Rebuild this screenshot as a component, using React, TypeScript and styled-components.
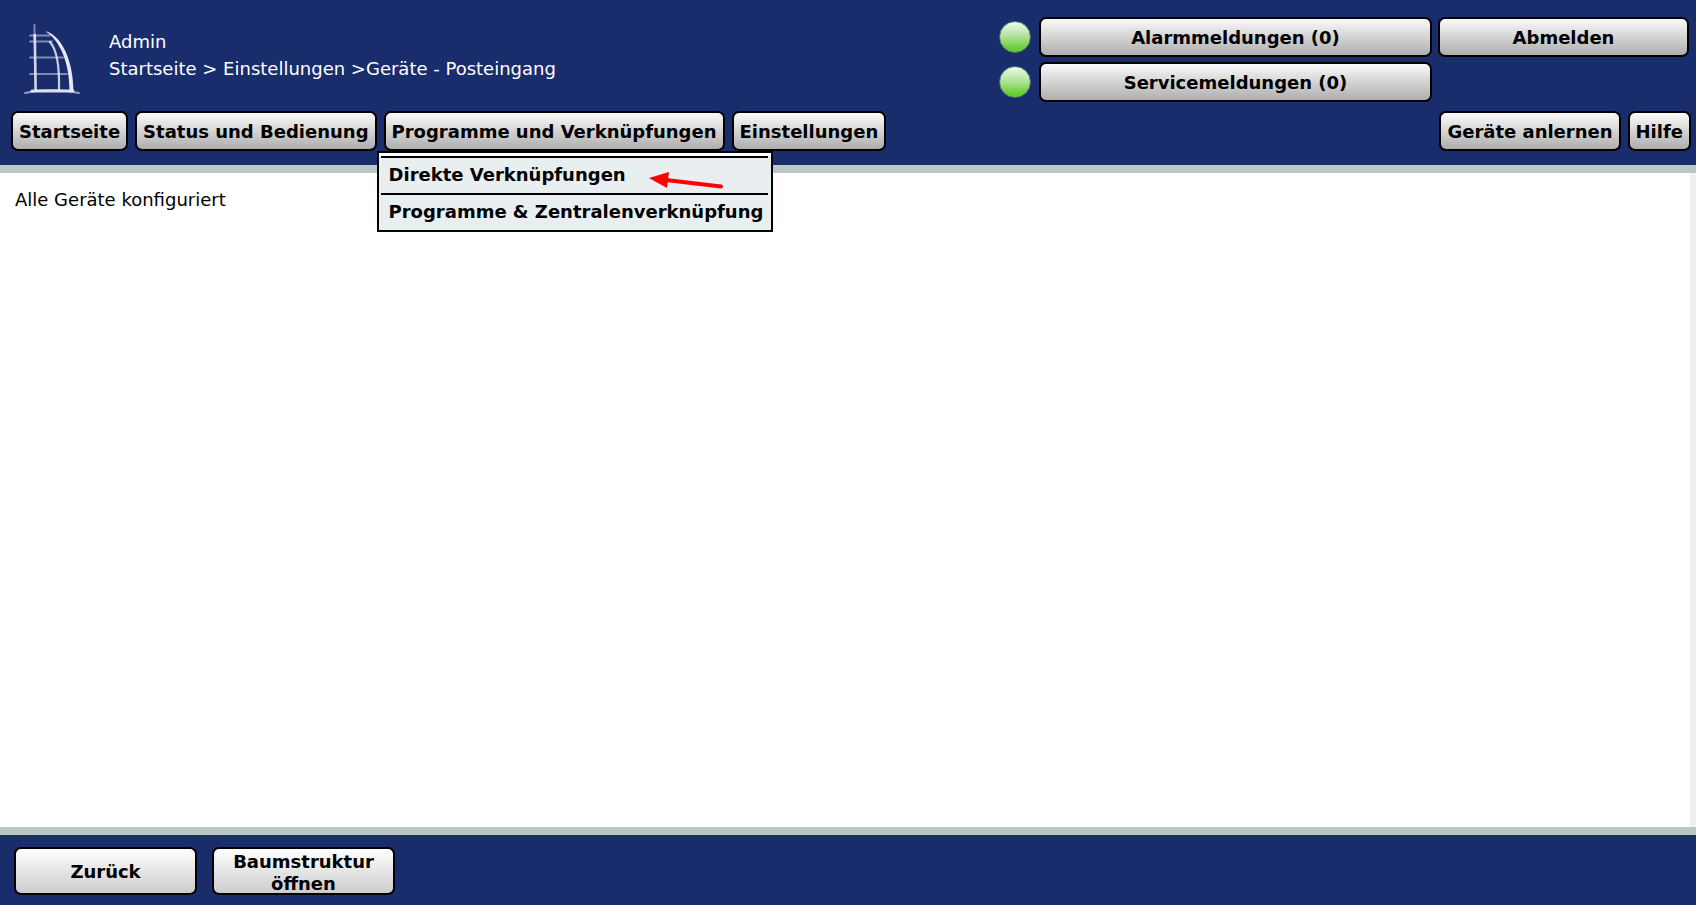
import React from "react";
import styled, { createGlobalStyle } from "styled-components";

const GlobalStyle = createGlobalStyle`
  *, *::before, *::after { box-sizing: border-box; }
  body {
    margin: 0;
    font-family: Verdana, "DejaVu Sans", sans-serif;
    font-size: 18px;
    line-height: 22px;
    color: #000;
    background: #fff;
  }
`;

const Page = styled.div`
  display: flex;
  flex-direction: column;
  min-height: 100vh;
`;

const Header = styled.header`
  background: #192c6c;
  border-bottom: 8px solid #bac6ca;
  padding: 17px 5px 14px 11px;
`;

const HeaderTop = styled.div`
  display: flex;
  align-items: flex-start;
  padding-right: 2px;
  margin-bottom: 9px;
`;

const Logo = styled.svg`
  display: block;
  flex: none;
  width: 60px;
  height: 76px;
  margin: 3px 26px 0 12px;
`;

const UserInfo = styled.div`
  flex: 1;
  padding-top: 11px;
  color: #fff;
  line-height: 27px;
`;

const Crumbs = styled.nav`
  white-space: pre;
`;

const CrumbLink = styled.a`
  color: inherit;
  text-decoration: none;
`;

const StatusGrid = styled.div`
  display: grid;
  grid-template-columns: 34px 393px 251px;
  column-gap: 6px;
  row-gap: 5px;
  align-items: center;
`;

const Lamp = styled.span`
  display: block;
  grid-column: 1;
  width: 32px;
  height: 32px;
  border-radius: 50%;
  border: 1px solid #4b7470;
  background: linear-gradient(#e9f7e3 5%, #a5df8b 55%, #68cd31 88%);
`;

const Button = styled.button<{ $footer?: boolean }>`
  height: ${(p) => (p.$footer ? 48 : 40)}px;
  width: ${(p) => (p.$footer ? "183px" : "auto")};
  padding: 2px 6px 0;
  border: 2px solid #000;
  border-radius: 7px;
  background: linear-gradient(${(p) => (p.$footer ? "#ffffff, #cccccc" : "#fafafa, #aeaeae")});
  color: #000;
  font: inherit;
  font-weight: bold;
  cursor: pointer;
`;

const MenuBar = styled.nav`
  display: flex;
  gap: 7px;
`;

const MenuGroup = styled.div<{ $end?: boolean }>`
  position: relative;
  margin-left: ${(p) => (p.$end ? "auto" : "0")};
`;

const Dropdown = styled.ul`
  position: absolute;
  top: 40px;
  left: -7px;
  z-index: 1;
  margin: 0;
  padding: 3px 3px 0 2px;
  border: 2px solid #000;
  background: linear-gradient(#fff 3px, #e9eff1 3px);
  list-style: none;
  white-space: nowrap;
`;

const MenuItem = styled.li`
  border-top: 2px solid #000;
`;

const MenuLink = styled.a`
  display: block;
  padding: 6px 5px 7px 8px;
  color: #000;
  font-weight: bold;
  text-decoration: none;
`;

const Pointer = styled.svg`
  position: absolute;
  top: 18px;
  left: 269px;
  width: 76px;
  height: 20px;
  pointer-events: none;
`;

const Content = styled.main`
  flex: 1;
  padding: 16px 15px;
  border-right: 6px solid #f0f0f0;
`;

const Footer = styled.footer`
  display: flex;
  gap: 15px;
  padding: 12px 14px 10px;
  background: #192c6c;
  border-top: 8px solid #bac6c6;
`;

function TowerLogo() {
  return (
    <Logo viewBox="0 0 60 76" fill="none" stroke="#e6eaf8" strokeLinecap="round" aria-label="Logo" role="img">
      <path d="M11.500 5V20" strokeWidth="2" opacity="0.5" />
      <path d="M11.800 15L12.600 70" strokeWidth="2.600" opacity="0.9" />
      <path d="M7 15.500H27M7 21.500H29M7 37.500H40M7 54H44" strokeWidth="1.800" opacity="0.5" />
      <path d="M24 12C38 17 50 38 50.500 71H46.500C46.500 42 37 22 24 12Z" fill="#e6eaf8" stroke="none" />
      <path d="M24 12C38 18 48 38 48.500 70" strokeWidth="1.500" opacity="0.6" />
      <path d="M27 22C34 30 36.500 50 36 70" strokeWidth="2.200" opacity="0.85" />
      <path d="M2 73Q27 67 56 73" strokeWidth="2" opacity="0.6" />
      <path d="M9 71H50" strokeWidth="3" opacity="0.9" />
    </Logo>
  );
}

export default function App() {
  return (
    <Page>
      <GlobalStyle />
      <Header>
        <HeaderTop>
          <TowerLogo />
          <UserInfo>
            <div>Admin</div>
            <Crumbs aria-label="Pfad">
              <CrumbLink href="#start">Startseite</CrumbLink>
              {" > "}
              <CrumbLink href="#einstellungen">Einstellungen</CrumbLink>
              {" >"}
              Geräte - Posteingang
            </Crumbs>
          </UserInfo>
          <StatusGrid>
            <Lamp />
            <Button type="button">Alarmmeldungen (0)</Button>
            <Button type="button">Abmelden</Button>
            <Lamp />
            <Button type="button">Servicemeldungen (0)</Button>
          </StatusGrid>
        </HeaderTop>
        <MenuBar>
          <Button type="button">Startseite</Button>
          <Button type="button">Status und Bedienung</Button>
          <MenuGroup>
            <Button type="button" aria-expanded="true">Programme und Verknüpfungen</Button>
            <Dropdown>
              <MenuItem><MenuLink href="#direkt">Direkte Verknüpfungen</MenuLink></MenuItem>
              <MenuItem>
                <MenuLink href="#zentrale">Programme &amp; Zentralenverknüpfung</MenuLink>
                <Pointer viewBox="0 0 76 20" aria-hidden="true">
                  <path d="M18 9L73 15.500" stroke="#f00" strokeWidth="4" strokeLinecap="round" />
                  <path d="M1 7L21 1L19 17Z" fill="#f00" />
                </Pointer>
              </MenuItem>
            </Dropdown>
          </MenuGroup>
          <Button type="button">Einstellungen</Button>
          <MenuGroup $end>
            <Button type="button">Geräte anlernen</Button>
          </MenuGroup>
          <Button type="button">Hilfe</Button>
        </MenuBar>
      </Header>
      <Content>Alle Geräte konfiguriert</Content>
      <Footer>
        <Button type="button" $footer>Zurück</Button>
        <Button type="button" $footer>Baumstruktur öffnen</Button>
      </Footer>
    </Page>
  );
}
